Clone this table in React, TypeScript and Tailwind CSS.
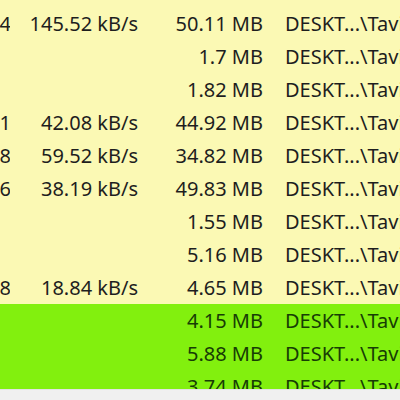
type Row = {
  io: string;
  rate: string;
  mem: string;
  isNew?: boolean;
};

const rows: Row[] = [
  { io: "4", rate: "145.52 kB/s", mem: "50.11 MB" },
  { io: "", rate: "", mem: "1.7 MB" },
  { io: "", rate: "", mem: "1.82 MB" },
  { io: "1", rate: "42.08 kB/s", mem: "44.92 MB" },
  { io: "8", rate: "59.52 kB/s", mem: "34.82 MB" },
  { io: "6", rate: "38.19 kB/s", mem: "49.83 MB" },
  { io: "", rate: "", mem: "1.55 MB" },
  { io: "", rate: "", mem: "5.16 MB" },
  { io: "8", rate: "18.84 kB/s", mem: "4.65 MB" },
  { io: "", rate: "", mem: "4.15 MB", isNew: true },
  { io: "", rate: "", mem: "5.88 MB", isNew: true },
  { io: "", rate: "", mem: "3.74 MB", isNew: true },
];

export default function App() {
  return (
    <div
      className="flex h-[400px] w-[400px] flex-col overflow-hidden bg-[#fbf9b4] text-[20px] text-[#1e1e1e]"
      style={{ fontFamily: '"Noto Sans", "Open Sans", sans-serif' }}
    >
      {/* Process list */}
      <div className="flex-1 overflow-hidden pt-[7px]">
        {rows.map((r, i) => (
          <div
            key={i}
            className={
              r.isNew
                ? "flex h-[33px] items-center whitespace-nowrap bg-[#82f00e] text-[#173d05]"
                : "flex h-[33px] items-center whitespace-nowrap"
            }
          >
            <div className="flex w-[10px] shrink-0 justify-end overflow-hidden">
              <span className="-mr-[1px]">{r.io}</span>
            </div>
            <div className="w-[128px] shrink-0 text-right">{r.rate}</div>
            <div className="w-[125px] shrink-0 text-right">{r.mem}</div>
            <div className="ml-[22px] overflow-hidden">DESKT...\Tavis</div>
          </div>
        ))}
      </div>

      {/* Horizontal scrollbar */}
      <div className="h-[11px] shrink-0 border-t border-[#e3e3e3] bg-[#f0f0f0]" />
    </div>
  );
}
